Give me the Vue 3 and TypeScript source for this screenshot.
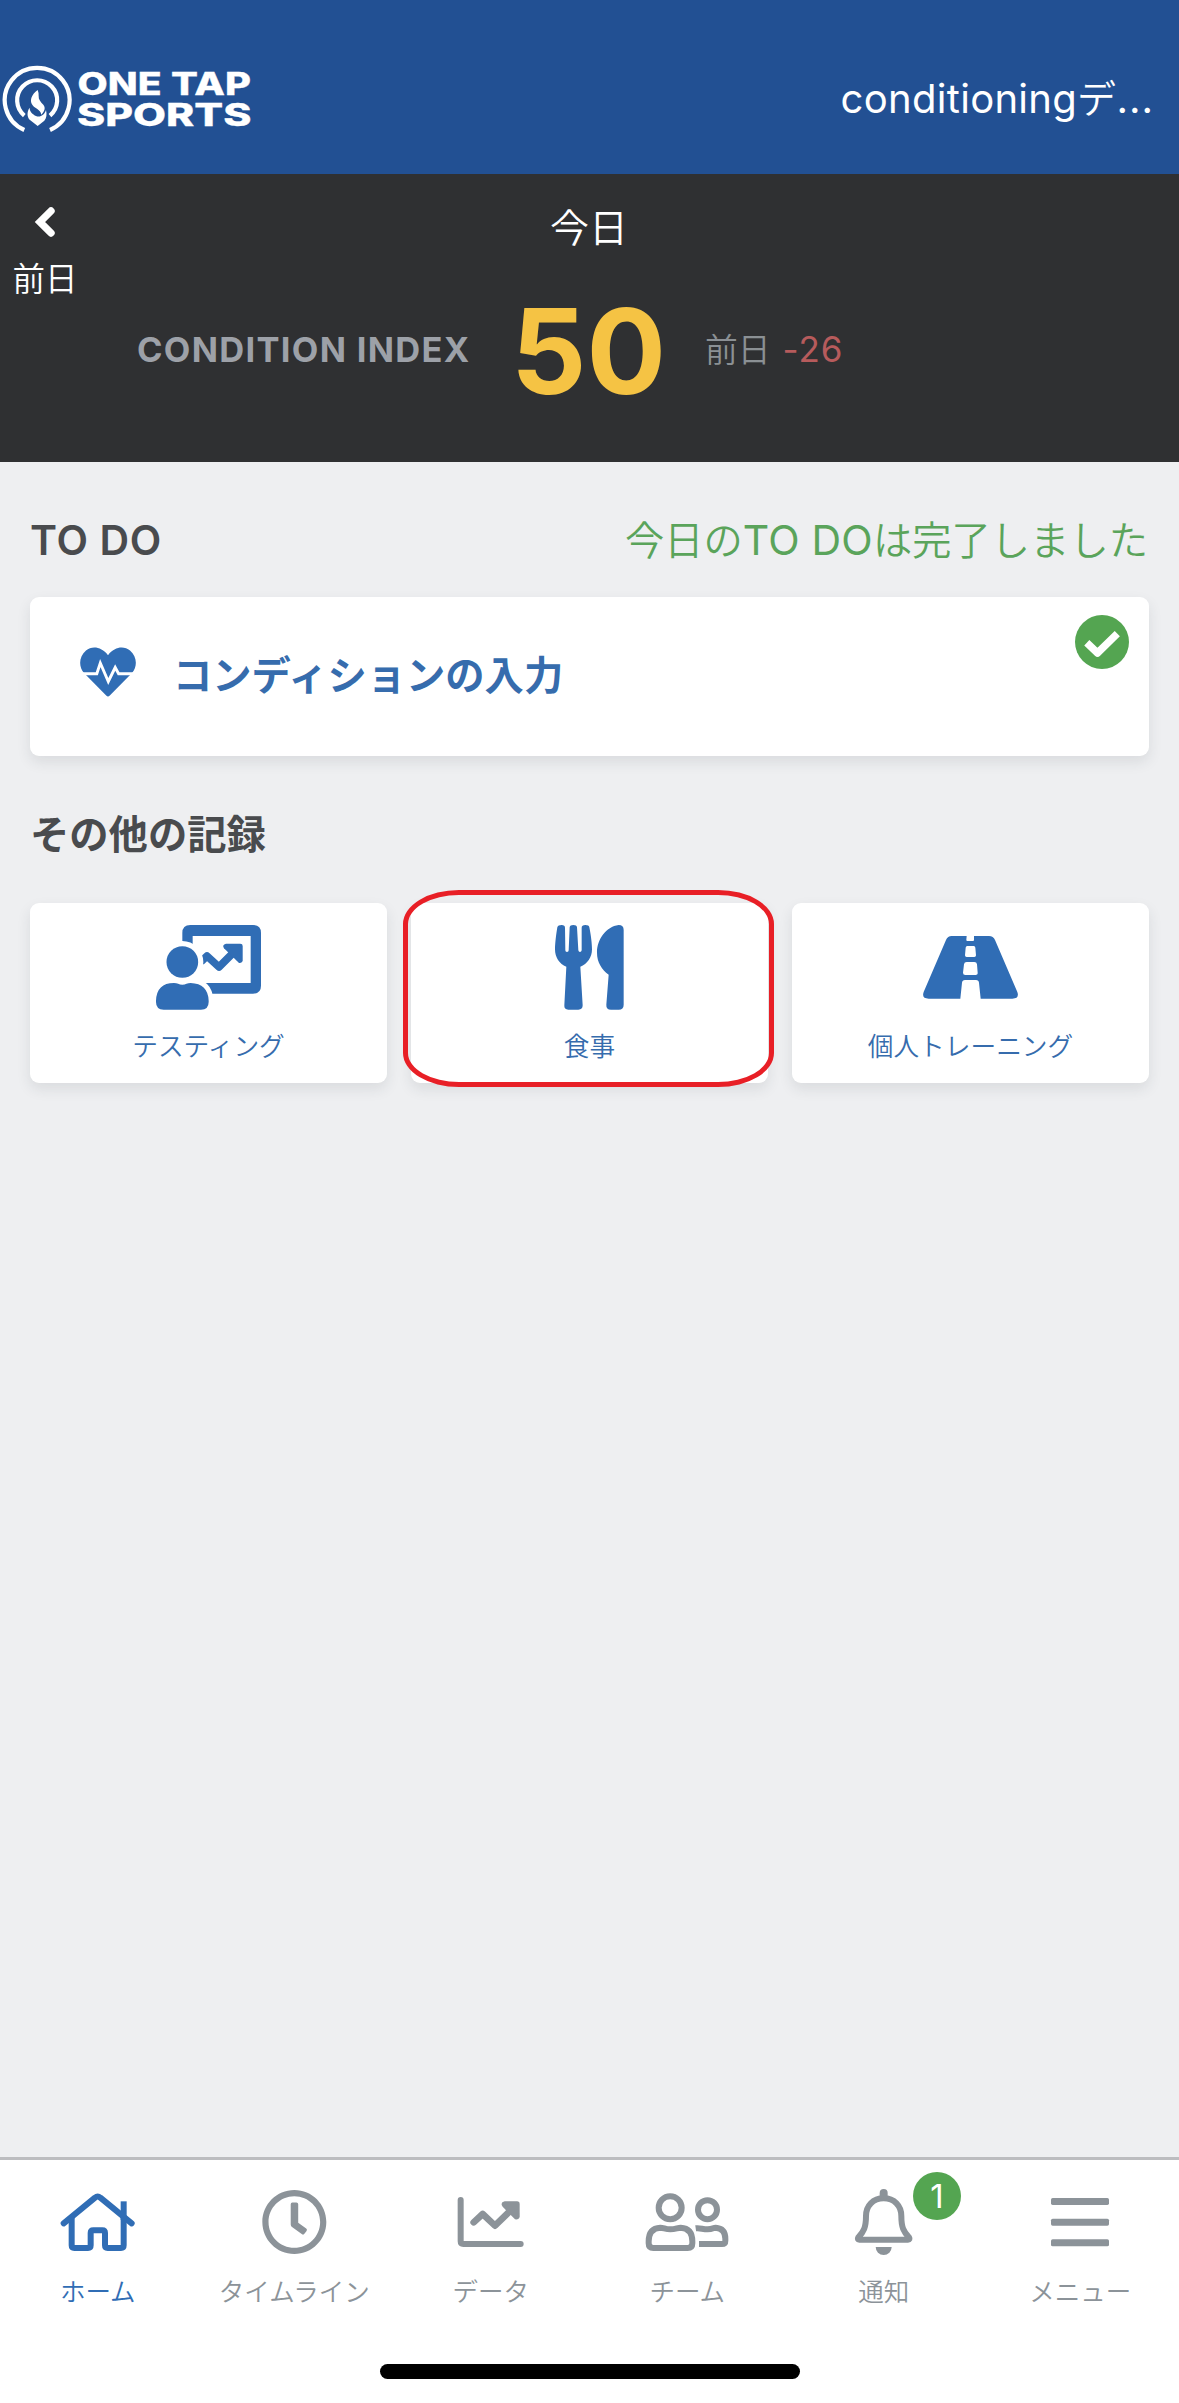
<script setup lang="ts">
interface Shortcut {
  id: 'testing' | 'meal' | 'training'
  label: string
}

interface Tab {
  id: 'home' | 'timeline' | 'data' | 'team' | 'notice' | 'menu'
  label: string
  viewBox: string
  badge?: number
}

const shortcuts: Shortcut[] = [
  { id: 'testing', label: 'テスティング' },
  { id: 'meal', label: '食事' },
  { id: 'training', label: '個人トレーニング' },
]

const activeTab = 'home'

const tabs: Tab[] = [
  { id: 'home', label: 'ホーム', viewBox: '160 138 270 216' },
  { id: 'timeline', label: 'タイムライン', viewBox: '749 138 270 216' },
  { id: 'data', label: 'データ', viewBox: '139 138 270 216' },
  { id: 'team', label: 'チーム', viewBox: '730 138 270 216' },
  { id: 'notice', label: '通知', viewBox: '148 138 270 216', badge: 1 },
  { id: 'menu', label: 'メニュー', viewBox: '738 138 270 216' },
]
</script>

<template>
  <div class="screen">
    <header class="topbar">
      <svg class="logo" width="256" height="80" viewBox="0 60 256 80">
        <g fill="none" stroke="#fff" stroke-width="4.2">
          <path d="M24.3 130A32.4 32.4 0 1 1 50 130" />
          <path d="M24.3 115.6A20 20 0 1 1 50 115.6" />
        </g>
        <g fill="#fff" transform="translate(0 40) scale(.3333)">
          <path d="M113 150C94 164 90 180 95 191C101 205 122 207 124 224C133 215 138 203 130 194C122 186 115 178 116 168Q117 160 113 150Z" />
          <path d="M89 203C80 215 81 232 90 240L113 258L133 242C140 235 141 222 138 210C133 226 120 233 108 228C98 223 88 214 89 203Z" />
        </g>
        <g class="logo-text">
          <text x="77.500" y="94.500" textLength="84" lengthAdjust="spacingAndGlyphs">ONE</text>
          <text x="171" y="94.500" textLength="80" lengthAdjust="spacingAndGlyphs">TAP</text>
          <text x="77" y="126" textLength="174.500" lengthAdjust="spacingAndGlyphs">SPORTS</text>
        </g>
      </svg>
      <div class="account"><span>conditioning</span><span class="account-jp">デ</span><span class="dots">...</span></div>
    </header>

    <section class="summary">
      <button class="prev">
        <svg width="22" height="32" viewBox="0 0 22 32">
          <path d="M17 5L6 16L17 27" fill="none" stroke="#fff" stroke-width="7.4" stroke-linecap="round" />
        </svg>
        <span>前日</span>
      </button>
      <div class="today">今日</div>
      <div class="index-row">
        <span class="index-label">CONDITION INDEX</span>
        <span class="index-value">50</span>
        <span class="index-diff">前日<b>-26</b></span>
      </div>
    </section>

    <main class="content">
      <div class="heading-row">
        <h2 class="latin">TO DO</h2>
        <p class="done"><span>今日の</span><span class="done-latin">TO DO</span><span>は完了しました</span></p>
      </div>

      <div class="todo-card">
        <svg class="heart" width="56" height="50" viewBox="0 0 56 50">
          <path d="M28 8.2C21.500-.5 12-1.500 6 3.500C-1.200 9.500-1.600 19.500 4 26L26.200 48.600Q28 50.300 29.800 48.600L52 26C57.600 19.500 57.200 9.500 50 3.500C44-1.500 34.500-.5 28 8.200Z" fill="#306db5" />
          <path d="M0 26.700H16.800L20.300 16L28.300 34.500L35.200 20.500L38.600 26.700H56" fill="none" stroke="#fff" stroke-width="2.900" />
        </svg>
        <span>コンディションの入力</span>
        <svg class="done-mark" width="54" height="54" viewBox="0 0 54 54">
          <circle cx="27" cy="27" r="27" fill="#54a551" />
          <path d="M11.800 27.800L22.500 38L42.300 18.600" fill="none" stroke="#fff" stroke-width="7.400" stroke-linejoin="round" />
        </svg>
      </div>

      <h2 class="other">その他の記録</h2>

      <div class="shortcuts">
        <div v-for="s in shortcuts" :key="s.id" class="shortcut">
          <div class="shortcut-icon">
            <svg v-if="s.id === 'testing'" width="105" height="85" viewBox="468 135 315 255">
              <path fill="#306db5" fill-rule="evenodd" d="M571 135H759Q783 135 783 159V317Q783 341 759 341H547V159Q547 135 571 135ZM578 168V309H752V168Z" />
              <path d="M603 245L621 228L657 261L702 216" fill="none" stroke="#306db5" stroke-width="23" stroke-linejoin="round" />
              <path fill="#306db5" d="M678 191H721Q728 191 728 198V241Q727 250 717 249L672 205Q665 194 678 191Z" />
              <circle cx="547" cy="246" r="63" fill="#fff" />
              <path fill="#306db5" stroke="#fff" stroke-width="28" paint-order="stroke" d="M468 362Q470 309 522 309C532 309 537 314 547 314S562 309 572 309Q624 311 626 362V366Q626 389 603 389H491Q468 389 468 366Z" />
              <circle cx="547" cy="246" r="47.500" fill="#306db5" />
            </svg>
            <svg v-else-if="s.id === 'meal'" width="69" height="85" viewBox="495 165 207 255">
              <g fill="#306db5">
                <path d="M502 172Q504 165 515 165Q525 165 525 173L526 241Q526 246 531 246T536 241L539 172Q540 165 550 165T561 172L565 241Q566 246 570 246T575 241L575 173Q575 165 586 165T598 172C603 195 606 222 606 238C606 262 592 282 571 290L578 406Q578 419 565 419H535Q522 419 523 406L529 290C508 282 495 262 495 238C495 222 498 195 502 172Z" />
                <path d="M701 180V404Q701 419 686 419H663Q648 419 649 404L656 314C635 298 621 276 621 248C621 208 648 170 686 165Q701 165 701 180Z" />
              </g>
            </svg>
            <svg v-else width="95" height="63" viewBox="429 168 285 189">
              <path fill="#306db5" fill-rule="evenodd" d="M515 168H560L559 180Q559 183 562 183H579Q582 183 582 180V168H627Q640 168 645 180L712 336Q719 356 697 356H602L597 308Q596 300 588 300H555Q547 300 546 308L541 356H446Q424 356 431 336L498 180Q503 168 515 168ZM562 198Q557 198 557 203L555 226Q555 231 560 231H583Q588 231 588 226L586 203Q586 198 581 198ZM560 246Q553 246 552 253L549 278Q549 285 556 285H587Q594 285 593 278L591 253Q590 246 583 246Z" />
            </svg>
          </div>
          <span>{{ s.label }}</span>
          <i v-if="s.id === 'meal'" class="highlight"></i>
        </div>
      </div>
    </main>

    <nav class="tabbar">
      <a v-for="t in tabs" :key="t.id" class="tab" :class="{ active: t.id === activeTab }">
        <svg width="90" height="72" :viewBox="t.viewBox">
          <g v-if="t.id === 'home'" fill="none" stroke="currentColor" stroke-width="18">
            <path d="M192 250L286 173Q294 166 302 173L396 250" stroke-linecap="round" />
            <path d="M372 184V240" />
            <path d="M216 232V316Q216 324 224 324H265Q273 324 273 316V279Q273 271 281 271H308Q316 271 316 279V316Q316 324 324 324H364Q372 324 372 316V232" />
          </g>
          <g v-else-if="t.id === 'timeline'" transform="translate(882 246) scale(.387) translate(-256 -256)" fill="currentColor">
            <path d="M256 8C119 8 8 119 8 256s111 248 248 248 248-111 248-248S393 8 256 8zm0 448c-110.500 0-200-89.500-200-200S145.500 56 256 56s200 89.500 200 200-89.500 200-200 200z" />
            <path d="M240 104H272Q286 104 286 118V262L348 307Q358 315 351 325L334 348Q326 358 316 351L238 295Q228 288 228 276V118Q228 104 240 104Z" />
          </g>
          <g v-else-if="t.id === 'data'">
            <path d="M183 180V304Q183 312 191 312H363" fill="none" stroke="currentColor" stroke-width="18" stroke-linecap="round" />
            <path d="M222 247L249 222L286 257L326 218" fill="none" stroke="currentColor" stroke-width="20" stroke-linejoin="round" stroke-linecap="round" />
            <path d="M315 184H352Q360 184 360 192V230Q358 240 346 238L309 200Q300 188 315 184Z" fill="currentColor" />
          </g>
          <g v-else-if="t.id === 'team'" fill="none" stroke="currentColor" stroke-width="18">
            <circle cx="811.500" cy="203" r="34.500" />
            <circle cx="923.500" cy="209" r="28.500" />
            <path d="M747 310V304Q747 265 782 263C792 263 797 268 812 268S834 263 843 263Q878 265 878 304V310Q878 324 864 324H761Q747 324 747 310Z" />
            <path d="M888 265C902 263 908 268 924 268S940 263 948 263Q977 265 977 296V302Q977 312 967 312H898" />
          </g>
          <g v-else-if="t.id === 'notice'" fill="currentColor">
            <path d="M282 175C250 175 229 198 229 228C229 262 222 276 206 292Q202 299 209 299H355Q362 299 358 292C342 276 335 262 335 228C335 198 314 175 282 175Z" fill="none" stroke="currentColor" stroke-width="18" />
            <rect x="270" y="147" width="24" height="30" rx="12" />
            <path d="M258 321H306A24 24 0 0 1 258 321Z" />
          </g>
          <g v-else fill="currentColor">
            <rect x="783" y="174" width="174" height="21" rx="5" />
            <rect x="783" y="236" width="174" height="21" rx="5" />
            <rect x="783" y="298" width="174" height="21" rx="5" />
          </g>
        </svg>
        <span class="tab-label">{{ t.label }}</span>
        <span v-if="t.badge" class="badge">{{ t.badge }}</span>
      </a>
      <i class="home-indicator"></i>
    </nav>
  </div>
</template>

<style>
body {
  margin: 0;
  background: #eeeff1;
}
</style>

<style scoped>
.screen {
  width: 1179px;
  height: 2403px;
  display: flex;
  flex-direction: column;
  background: #eeeff1;
  font-family: Inter, "Noto Sans CJK JP", sans-serif;
  overflow: hidden;
}

.topbar {
  height: 174px;
  box-sizing: border-box;
  padding: 60px 25px 0 0;
  display: flex;
  justify-content: space-between;
  align-items: flex-start;
  background: #225093;
}

.logo {
  display: block;
}

.logo-text {
  fill: #fff;
  stroke: #fff;
  stroke-width: .3;
  font: 800 31px Inter, sans-serif;
}

.account {
  display: flex;
  align-items: baseline;
  height: 78px;
  line-height: 78px;
  color: #fff;
  font-size: 40px;
  letter-spacing: .3px;
  white-space: nowrap;
}

.account-jp {
  font-size: 39px;
  font-weight: 350;
}

.dots {
  letter-spacing: 1px;
}

.summary {
  position: relative;
  height: 288px;
  background: #2f3032;
  display: flex;
  flex-direction: column;
}

.prev {
  position: absolute;
  left: 12px;
  top: 32px;
  width: 66px;
  padding: 0;
  border: 0;
  background: none;
  display: flex;
  flex-direction: column;
  align-items: center;
  color: #fff;
  font: 350 32.500px/48px "Noto Sans CJK JP", sans-serif;
}

.prev svg {
  display: block;
  margin-bottom: 15px;
}

.today {
  margin-top: 24px;
  padding-right: 1px;
  text-align: center;
  color: #fff;
  font-size: 39px;
  font-weight: 350;
  line-height: 60px;
}

.index-row {
  display: grid;
  grid-template-columns: 479px 219px 1fr;
  align-items: center;
  height: 120px;
  margin-top: 30px;
}

.index-label {
  padding-left: 137px;
  color: #9da1a8;
  font-size: 34.500px;
  font-weight: 650;
  letter-spacing: 1.300px;
  white-space: nowrap;
}

.index-value {
  padding-top: 3px;
  text-align: center;
  color: #f5c344;
  font-size: 118px;
  font-weight: 700;
  line-height: 120px;
}

.index-diff {
  padding: 0 0 4px 7px;
  color: #8b9094;
  font-size: 32.800px;
  font-weight: 350;
}

.index-diff b {
  margin-left: 12px;
  color: #b75b5c;
  font-size: 35px;
  font-weight: 400;
  letter-spacing: 1px;
}

.content {
  flex: 1;
  padding: 48px 30px 0;
}

.heading-row {
  display: flex;
  justify-content: space-between;
  align-items: baseline;
  height: 60px;
  line-height: 60px;
}

h2,
p {
  margin: 0;
}

h2 {
  color: #494b4e;
  font-size: 39.300px;
  font-weight: 700;
  line-height: 60px;
}

h2.latin {
  font-size: 41px;
  font-weight: 600;
  letter-spacing: .6px;
}

.done {
  padding-right: 1px;
  color: #5aa45b;
  font-size: 39.300px;
  font-weight: 350;
}

.done-latin {
  font-size: 41px;
  font-weight: 400;
  letter-spacing: .2px;
}

.todo-card {
  position: relative;
  height: 159px;
  margin-top: 27px;
  box-sizing: border-box;
  padding: 0 50px 9px;
  display: flex;
  align-items: center;
  gap: 37px;
  background: #fff;
  border-radius: 9px;
  box-shadow: 0 6px 14px rgba(40, 45, 55, .1);
  color: #366cad;
  font-size: 39.300px;
  font-weight: 700;
}

.heart {
  margin-bottom: 1px;
}

.done-mark {
  position: absolute;
  right: 20px;
  top: 18px;
}

.other {
  padding-top: 49px;
}

.shortcuts {
  display: grid;
  grid-template-columns: repeat(3, 357px);
  gap: 24px;
  margin-top: 38px;
}

.shortcut {
  position: relative;
  height: 180px;
  box-sizing: border-box;
  padding-top: 22px;
  display: flex;
  flex-direction: column;
  align-items: center;
  background: #fff;
  border-radius: 9px;
  box-shadow: 0 6px 14px rgba(40, 45, 55, .1);
  color: #366cad;
  font-size: 25.700px;
  font-weight: 350;
  line-height: 40px;
}

.shortcut-icon {
  height: 85px;
  margin-bottom: 17px;
  display: flex;
  align-items: center;
}

.shortcut-icon svg {
  display: block;
}

.highlight {
  position: absolute;
  left: -8px;
  top: -13px;
  width: 371px;
  height: 197px;
  box-sizing: border-box;
  border: 5px solid #e81f26;
  border-radius: 56px / 34px;
}

.tabbar {
  position: relative;
  height: 246px;
  box-sizing: border-box;
  border-top: 3px solid #bcbdc0;
  background: #fff;
  display: grid;
  grid-template-columns: repeat(6, 1fr);
}

.tab {
  position: relative;
  padding-top: 26px;
  display: flex;
  flex-direction: column;
  align-items: center;
  color: #8c9399;
}

.tab.active {
  color: #306db5;
}

.tab svg {
  display: block;
}

.tab-label {
  margin: 14px 1px 0 0;
  font-size: 25.500px;
  font-weight: 350;
  line-height: 40px;
  white-space: nowrap;
}

.badge {
  position: absolute;
  left: 127px;
  top: 12px;
  width: 48px;
  height: 48px;
  border-radius: 50%;
  background: #54a551;
  color: #fff;
  font-size: 33px;
  line-height: 48px;
  text-align: center;
}

.home-indicator {
  position: absolute;
  left: 380px;
  top: 204px;
  width: 420px;
  height: 15px;
  border-radius: 8px;
  background: #000;
}
</style>
